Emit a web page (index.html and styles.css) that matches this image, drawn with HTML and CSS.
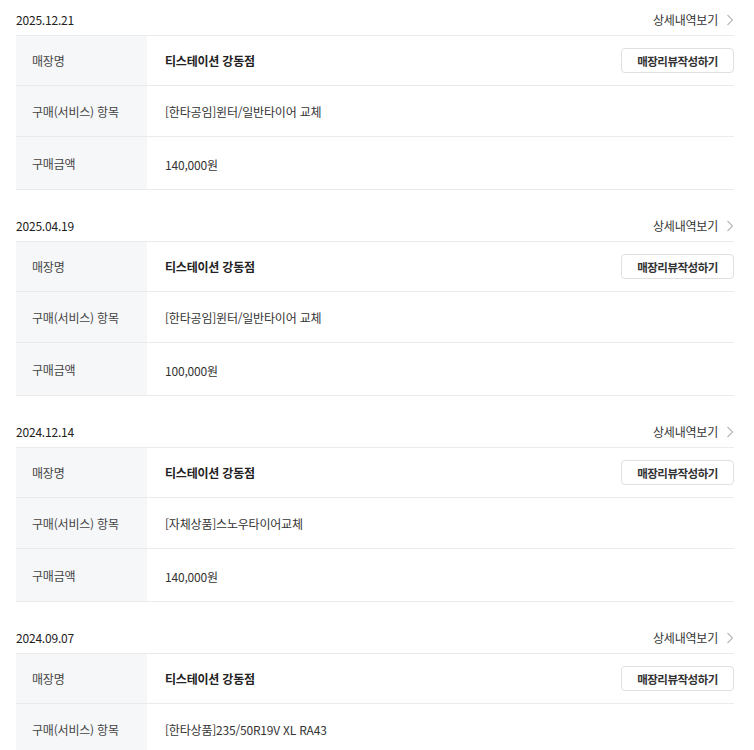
FILE: index.html
```html
<!DOCTYPE html>
<html lang="ko">
<head>
<meta charset="utf-8">
<link rel="stylesheet" href="styles.css">
</head>
<body>
<div class="list">
  <section class="order">
    <div class="order-head">
      <span class="date">2025.12.21</span>
      <a class="detail">상세내역보기<svg class="chev" viewBox="0 0 8 12" width="8" height="12"><path d="M1.5 1 L6.5 6 L1.5 11" fill="none" stroke="#b8b8b8" stroke-width="1.1"/></svg></a>
    </div>
    <div class="table">
      <div class="row r1">
        <div class="th">매장명</div>
        <div class="td store"><strong>티스테이션 강동점</strong><button class="btn">매장리뷰작성하기</button></div>
      </div>
      <div class="row r2">
        <div class="th">구매(서비스) 항목</div>
        <div class="td">[한타공임]윈터/일반타이어 교체</div>
      </div>
      <div class="row r3">
        <div class="th">구매금액</div>
        <div class="td price">140,000원</div>
      </div>
    </div>
  </section>
  <section class="order">
    <div class="order-head">
      <span class="date">2025.04.19</span>
      <a class="detail">상세내역보기<svg class="chev" viewBox="0 0 8 12" width="8" height="12"><path d="M1.5 1 L6.5 6 L1.5 11" fill="none" stroke="#b8b8b8" stroke-width="1.1"/></svg></a>
    </div>
    <div class="table">
      <div class="row r1">
        <div class="th">매장명</div>
        <div class="td store"><strong>티스테이션 강동점</strong><button class="btn">매장리뷰작성하기</button></div>
      </div>
      <div class="row r2">
        <div class="th">구매(서비스) 항목</div>
        <div class="td">[한타공임]윈터/일반타이어 교체</div>
      </div>
      <div class="row r3">
        <div class="th">구매금액</div>
        <div class="td price">100,000원</div>
      </div>
    </div>
  </section>
  <section class="order">
    <div class="order-head">
      <span class="date">2024.12.14</span>
      <a class="detail">상세내역보기<svg class="chev" viewBox="0 0 8 12" width="8" height="12"><path d="M1.5 1 L6.5 6 L1.5 11" fill="none" stroke="#b8b8b8" stroke-width="1.1"/></svg></a>
    </div>
    <div class="table">
      <div class="row r1">
        <div class="th">매장명</div>
        <div class="td store"><strong>티스테이션 강동점</strong><button class="btn">매장리뷰작성하기</button></div>
      </div>
      <div class="row r2">
        <div class="th">구매(서비스) 항목</div>
        <div class="td">[자체상품]스노우타이어교체</div>
      </div>
      <div class="row r3">
        <div class="th">구매금액</div>
        <div class="td price">140,000원</div>
      </div>
    </div>
  </section>
  <section class="order">
    <div class="order-head">
      <span class="date">2024.09.07</span>
      <a class="detail">상세내역보기<svg class="chev" viewBox="0 0 8 12" width="8" height="12"><path d="M1.5 1 L6.5 6 L1.5 11" fill="none" stroke="#b8b8b8" stroke-width="1.1"/></svg></a>
    </div>
    <div class="table">
      <div class="row r1">
        <div class="th">매장명</div>
        <div class="td store"><strong>티스테이션 강동점</strong><button class="btn">매장리뷰작성하기</button></div>
      </div>
      <div class="row r2">
        <div class="th">구매(서비스) 항목</div>
        <div class="td">[한타상품]235/50R19V XL RA43</div>
      </div>
      <div class="row r3">
        <div class="th">구매금액</div>
        <div class="td price">180,000원</div>
      </div>
    </div>
  </section>
</div>
</body>
</html>
```
FILE: styles.css
```css
* { box-sizing: border-box; }
html, body { margin: 0; padding: 0; background: #fff; }
body {
  font-family: "Noto Sans CJK KR", "Noto Sans", sans-serif;
  font-size: 12px;
  color: #222;
  letter-spacing: -0.2px;
}
.list { padding: 0 20px 0 16px; }
.order { padding-bottom: 16px; }
.order-head {
  height: 36px;
  display: flex;
  justify-content: space-between;
  align-items: center;
  padding-top: 4px;
  border-bottom: 1px solid #ebebeb;
}
.date { color: #222; font-size: 12px; }
.detail { display: flex; align-items: center; gap: 8px; color: #333; }
.chev { display: block; }
.row {
  display: flex;
  border-bottom: 1px solid #ebebeb;
}
.th {
  width: 131px;
  flex: none;
  background: #f6f7f9;
  color: #444;
  padding: 0 16px;
  display: flex;
  align-items: center;
}
.r1 .th { min-height: 49px; }
.r2 .th { min-height: 50px; }
.r3 .th { min-height: 52px; }
.td {
  flex: 1;
  display: flex;
  align-items: center;
  padding: 0 0 0 18px;
  color: #333;
}
.store { justify-content: space-between; }
.store strong { font-weight: 700; color: #222; }
.price { padding-top: 3px; }
.btn {
  font-family: inherit;
  font-size: 11.5px;
  font-weight: 700;
  letter-spacing: -0.5px;
  color: #333;
  background: #fff;
  border: 1px solid #e0e0e0;
  border-radius: 4px;
  width: 113px;
  height: 25px;
  padding: 0;
}
```
